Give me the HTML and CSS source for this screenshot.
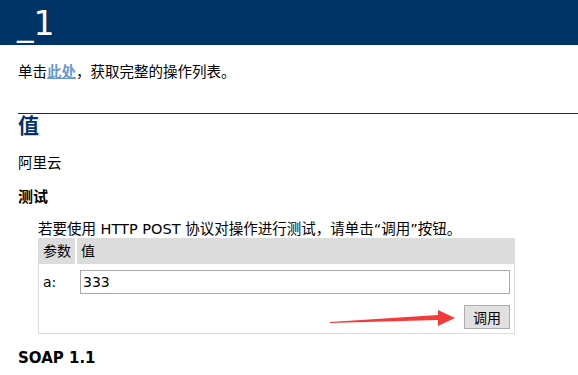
FILE: index.html
```html
<!DOCTYPE html>
<html lang="zh-CN">
<head>
    <meta charset="UTF-8">
    <title>_1 Web 服务</title>
    <link rel="stylesheet" href="styles.css">
</head>
<body>
    <div class="heading1">_1</div>
    <div id="content">
        <p class="intro">单击<a href="#">此处</a>，获取完整的操作列表。</p>

        <h2>值</h2>
        <p class="intro">阿里云</p>

        <h3>测试</h3>
        <div class="test">
            <p>若要使用 HTTP POST 协议对操作进行测试，请单击“调用”按钮。</p>
            <form action="#" method="POST">
                <table class="frm">
                    <tr>
                        <td class="frmHeader first">参数</td>
                        <td class="frmHeader">值</td>
                    </tr>
                    <tr>
                        <td class="frmText">a:</td>
                        <td><input class="frmInput" type="text" name="a" value="333"></td>
                    </tr>
                    <tr>
                        <td></td>
                        <td class="actions"><input type="submit" value="调用" class="button"></td>
                    </tr>
                </table>
            </form>
        </div>

        <h3 class="soap">SOAP 1.1</h3>
    </div>

    <svg class="arrow" width="140" height="24" viewBox="0 0 140 24">
        <polygon points="0,12 108,5 108,0 125,8 108,16 108,10 0,13" fill="#f33b3b"/>
    </svg>
</body>
</html>
```

FILE: styles.css
```css
body {
    color: #000000;
    background-color: white;
    font-family: "DejaVu Sans", "Noto Sans CJK SC", sans-serif;
    margin: 0;
    position: relative;
}

.heading1 {
    color: #ffffff;
    background-color: #003366;
    font-size: 33px;
    height: 43px;
    line-height: 43px;
    padding: 2px 0 0 17px;
}

#content {
    font-size: 14.5px;
    line-height: 18px;
    padding-left: 18px;
}

#content p {
    margin: 0;
}

#content > p:first-child {
    padding-top: 18px;
}

a:link, a:visited {
    color: #6699cc;
    font-weight: bold;
    text-decoration: underline;
}

h2 {
    font-size: 21px;
    line-height: 24px;
    font-weight: bold;
    color: #003366;
    border-top: 1px solid #003366;
    margin: 32px 0 16px 0;
}

h3 {
    font-size: 15px;
    line-height: 20px;
    font-weight: bold;
    margin: 15px 0 13px 0;
}

.test {
    margin-left: 20px;
}

.frm {
    border-collapse: collapse;
    border: 1px solid #dcdcdc;
    width: 477px;
}

.frm td {
    padding: 4px;
    font-size: 14px;
    line-height: 17px;
}

.frmHeader {
    background-color: #dcdcdc;
}

.frmHeader.first {
    border-right: 2px solid white;
    width: 28px;
}

.frmInput {
    box-sizing: border-box;
    width: 100%;
    height: 24px;
    margin: 2px 0;
    padding: 0 2px;
    border: 1px solid #a9a9a9;
    font-family: "DejaVu Sans", "Noto Sans CJK SC", sans-serif;
    font-size: 14px;
}

.actions {
    text-align: right;
}

.button {
    height: 24px;
    width: 46px;
    margin: 1px 0 0 0;
    background-color: #e1e1e1;
    border: 1px solid #adadad;
    font-family: "Noto Sans CJK SC", sans-serif;
    font-size: 14px;
    padding: 0;
}

.soap {
    margin-top: 14px;
}

.arrow {
    position: absolute;
    left: 330px;
    top: 310px;
}
```
